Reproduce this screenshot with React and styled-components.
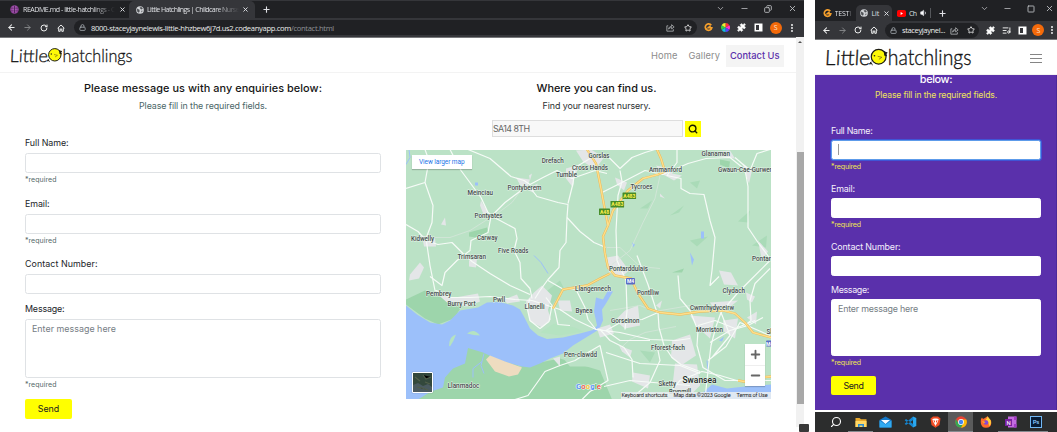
import React, { useLayoutEffect, useRef, useState } from "react";
import styled, { createGlobalStyle } from "styled-components";
import {
  ArrowLeft, ArrowRight, RotateCw, House, Lock, Star, X, Plus, Minus, ChevronDown,
  Copy, Square, EllipsisVertical, Puzzle, Search, Volume1, ListMusic,
} from "lucide-react";

const Global = createGlobalStyle`
  * { box-sizing: border-box; }
  body { margin: 0; background: #fff; overflow: hidden; font-family: Inter, "Liberation Sans", sans-serif; }
  svg { display: block; flex: none; }
`;

/* ---------- text that is tracked to an exact width ---------- */
const FitBox = styled.span`
  display: block;
  flex: none;
  width: ${(p) => p.$w}px;
  white-space: nowrap;
`;
const FitText = styled.span`
  display: inline-block;
`;
function Fit({ w, children }) {
  const ref = useRef(null);
  const [spacing, setSpacing] = useState(0);
  useLayoutEffect(() => {
    const natural = ref.current.getBoundingClientRect().width;
    setSpacing((w - natural) / ref.current.textContent.length);
  }, [w]);
  return (
    <FitBox $w={w}>
      <FitText ref={ref} style={{ letterSpacing: spacing }}>{children}</FitText>
    </FitBox>
  );
}

/* ---------- page ---------- */
const Page = styled.main`
  position: relative;
  display: flex;
  gap: 11px;
  width: 1057px;
  height: 432px;
  overflow: hidden;
`;
const Window = styled.section`
  display: flex;
  flex-direction: column;
  flex: none;
  width: ${(p) => p.$w}px;
  height: 432px;
`;
const Corner = styled.div`
  position: absolute;
  left: 799px;
  top: 424px;
  width: 10px;
  height: 8px;
  background: #393939;
  border-radius: 1px;
`;

/* ---------- browser chrome ---------- */
const ui = `font-family: "Open Sans", "Noto Sans", sans-serif; font-weight: 500;`;
const TabStrip = styled.div`
  ${ui}
  display: flex;
  height: ${(p) => p.$h}px;
  padding-top: ${(p) => p.$top}px;
  background: #202124;
  border-top: 1px solid ${(p) => p.$line};
  color: #dfe1e5;
  font-size: 7px;
`;
const Tab = styled.div`
  display: flex;
  align-items: center;
  gap: ${(p) => p.$gap ?? 3}px;
  width: ${(p) => p.$w}px;
  padding-left: ${(p) => p.$pl}px;
  border-radius: 5px 5px 0 0;
  background: ${(p) => (p.$active ? "#35363a" : "transparent")};
  flex: none;
`;
const Fade = styled.div`
  overflow: hidden;
  mask-image: linear-gradient(90deg, #000 75%, transparent);
`;
const Controls = styled.div`
  display: flex;
  align-items: center;
  height: 15px;
  margin-left: auto;
  margin-top: -${(p) => p.$up}px;
  color: #c4c6ca;
`;
const Cell = styled.div`
  display: flex;
  align-items: center;
  justify-content: center;
  flex: none;
  width: ${(p) => p.$w}px;
  height: 100%;
  color: ${(p) => p.$c || "inherit"};
`;
const Flip = styled.span`
  display: block;
  transform: scaleX(-1);
`;
const Toolbar = styled.div`
  ${ui}
  display: flex;
  align-items: center;
  height: ${(p) => p.$h}px;
  padding-left: 3px;
  background: #35363a;
  border-bottom: 1px solid #77787b;
  color: #eceded;
  font-size: 7.6px;
`;
const Address = styled.div`
  display: flex;
  align-items: center;
  width: ${(p) => p.$w}px;
  height: 15px;
  padding-left: ${(p) => p.$pl}px;
  margin-left: ${(p) => p.$ml}px;
  margin-right: 3px;
  border-radius: 8px;
  background: #202124;
  flex: none;
`;
const AddressText = styled.div`
  display: flex;
  margin-left: ${(p) => p.$ml}px;
  margin-right: auto;
`;
const Dim = styled.span`
  color: #8f9296;
`;
const Avatar = styled.span`
  display: flex;
  align-items: center;
  justify-content: center;
  width: 12px;
  height: 12px;
  border-radius: 50%;
  background: #f46a0a;
  color: #ffe3cf;
  font-size: 7px;
`;
const Divider = styled.span`
  width: 1px;
  height: 10px;
  background: #55575b;
`;

const Share = () => (
  <svg width="9" height="9" viewBox="0 0 16 16" fill="none" stroke="#b5b7ba" strokeWidth="1.4">
    <path d="M4 5H1.500V14.500H13V11M4.500 11C5 7.500 7 6 10 6V3L14.500 7L10 10.500V8C7.500 8 6 9 4.500 11Z" />
  </svg>
);
const GMark = () => (
  <svg width="9" height="9" viewBox="0 0 18 18" fill="none" stroke="#f6a02c" strokeWidth="3.4">
    <path d="M14.500 4.500A6.500 6.500 0 1 0 15.500 9.500H9L13 6" />
  </svg>
);
const Wheel = () => (
  <svg width="9" height="9" viewBox="-9 -9 18 18">
    {["#f33", "#f3c", "#54f", "#1bd", "#3c4", "#ee3"].map((c, i) => (
      <path key={c} d="M0 0L-4.500 -7.800A9 9 0 0 1 4.500 -7.800Z" fill={c} transform={`rotate(${i * 60 + 30})`} />
    ))}
  </svg>
);
const Panel = () => (
  <svg width="9" height="9" viewBox="0 0 9 9">
    <path d="M.5 .5H8.500V8.500H.5Z" fill="#fff" />
    <path d="M2 2H5V7H2Z" fill="#35363a" />
  </svg>
);
const Gitpod = () => (
  <svg width="9" height="9" viewBox="0 0 10 10">
    <circle cx="5" cy="5" r="4.700" fill="#94449f" />
    <path d="M5 1V9M1.500 3.500H8.500M1.500 6.500H8.500" stroke="#55205f" strokeWidth="1" />
    <path d="M3.500 1.500V8M6.500 1.500V8" stroke="#d391dc" strokeWidth=".5" />
  </svg>
);
const Site = () => (
  <svg width="8" height="8" viewBox="0 0 10 10">
    <circle cx="5" cy="5" r="4.800" fill="#d0d2d5" />
    <path d="M1.200 3.200L4.300 4.800L4.600 6.500L3.600 8.500L1.500 6.800ZM4.500 1.500L7.500 1.500L8.500 3.500L6.500 4.500L5.300 3.200ZM6.500 6L8.500 5.800L7 8.200Z" fill="#4f5256" />
  </svg>
);
const YouTube = () => (
  <svg width="9" height="7" viewBox="0 0 9 7">
    <rect width="9" height="7" rx="1.800" fill="#f00" />
    <path d="M3.600 2V5L6 3.500Z" fill="#fff" />
  </svg>
);

const NavIcons = ({ w }) => (
  <>
    <Cell $w={w}><ArrowLeft size={9} strokeWidth={2.8} /></Cell>
    <Cell $w={w} $c="#85878a"><ArrowRight size={9} strokeWidth={2.5} /></Cell>
    <Cell $w={w}><RotateCw size={8} strokeWidth={3} /></Cell>
    <Cell $w={w}>
      <svg width="8" height="8" viewBox="0 0 8 8" fill="none" stroke="currentColor" strokeWidth="1">
        <path d="M.6 4.200L4 1L7.400 4.200M1.700 3.500V7.300H3.200V5H4.800V7.300H6.300V3.500" />
      </svg>
    </Cell>
  </>
);

/* ---------- site header ---------- */
const Header = styled.header`
  display: flex;
  align-items: center;
  flex: none;
  height: ${(p) => p.$h}px;
  padding: ${(p) => p.$pad};
  background: #fff;
  border-bottom: 1px solid #f3f3f3;
`;
const Nav = styled.nav`
  display: flex;
  align-items: center;
  margin-left: auto;
  font-size: 9.3px;
  color: #8c8c8c;
`;
const NavLink = styled.span`
  display: flex;
  align-items: center;
  height: 22px;
  padding: 0 ${(p) => (p.$active ? 4.5 : 5.5)}px;
  font-weight: ${(p) => (p.$active ? 500 : 400)};
  color: ${(p) => (p.$active ? "#5a30ab" : "inherit")};
  background: ${(p) => (p.$active ? "#f4f4f4" : "transparent")};
`;
const Burger = styled.div`
  display: flex;
  flex-direction: column;
  gap: 3px;
  margin-left: auto;
  width: 12px;
`;
const BurgerLine = styled.span`
  height: 1px;
  background: #858585;
`;
const LogoSvg = styled.svg`
  font-family: Lato, sans-serif;
  font-weight: 300;
  font-size: 17.5px;
  overflow: visible;
`;
const Logo = ({ w }) => (
  <LogoSvg width={w} height={(w * 22) / 124} viewBox="0 0 124 22">
    <g fill="#161616" stroke="#161616" strokeWidth=".3">
      <text transform="translate(.5 17) skewX(-3)" textLength="38" lengthAdjust="spacingAndGlyphs">Little</text>
      <text x="53.500" y="17" textLength="70" lengthAdjust="spacingAndGlyphs">hatchlings</text>
    </g>
    <circle cx="45.800" cy="9.800" r="6.200" fill="#fdf907" stroke="#1c1c14" strokeWidth="1" />
    <path d="M50 5.500L53 6.500L51.700 7.500L52.500 9L50.500 8.500M39.500 14L38 16L40 15.500L40.500 17" fill="#1c1c14" stroke="#1c1c14" strokeWidth=".7" />
    <circle cx="42.300" cy="9" r=".7" fill="#222" />
    <path d="M45 9.500L48.500 10.300L46 12" fill="none" stroke="#775e19" strokeWidth=".6" />
  </LogoSvg>
);

/* ---------- contact form ---------- */
const DeskBody = styled.div`
  display: flex;
  flex: 1;
  min-height: 0;
`;
const DeskContent = styled.div`
  display: flex;
  gap: 25px;
  width: 796px;
  padding: 5px 0 0 25px;
`;
const Column = styled.div`
  display: flex;
  flex-direction: column;
  width: ${(p) => p.$w}px;
`;
const FinderHead = styled.div`
  padding-left: 16px;
`;
const Title = styled.h1`
  display: flex;
  justify-content: center;
  flex: none;
  margin: 0;
  font-size: 10.9px;
  font-weight: 500;
  line-height: 20px;
  color: ${(p) => (p.$dark ? "#fff" : "#151515")};
`;
const Subtitle = styled.p`
  display: flex;
  justify-content: center;
  flex: none;
  margin: ${(p) => p.$mt || 0}px 0 ${(p) => p.$mb}px;
  font-size: ${(p) => p.$size || 8.9}px;
  line-height: 15px;
  color: ${(p) => p.$c};
`;
const Field = styled.div`
  display: flex;
  flex-direction: column;
  flex: none;
  margin-bottom: ${(p) => p.$mb}px;
`;
const Label = styled.label`
  font-size: 8.9px;
  line-height: 18px;
  color: ${(p) => (p.$dark ? "#f4effb" : "#222529")};
`;
const Input = styled.div`
  height: ${(p) => p.$h}px;
  margin-top: ${(p) => p.$mt}px;
  padding: 3.5px 6px;
  border: 1px solid ${(p) => (p.$focus ? "#5d9bea" : p.$dark ? "#fff" : "#dfe2e5")};
  border-radius: 2.5px;
  background: #fff;
  font-size: 8.9px;
  line-height: 12px;
  color: #757d84;
  box-shadow: ${(p) => (p.$focus ? "0 0 0 1px #3f55d6" : "none")};
`;
const Caret = styled.span`
  display: block;
  width: 1px;
  height: 11px;
  background: #999;
`;
const Required = styled.small`
  font-size: 7px;
  line-height: 14px;
  color: ${(p) => (p.$dark ? "#f1e84d" : "#53696a")};
`;
const Send = styled.div`
  display: flex;
  align-items: center;
  justify-content: center;
  flex: none;
  width: ${(p) => p.$w}px;
  height: ${(p) => p.$h}px;
  border-radius: 2px;
  background: #ff0;
  color: #202020;
  font-size: 8.9px;
`;

const deskForm = {
  h: 20, mt: 1, area: 59, gap: 7.7, shortGap: 5.6, areaGap: 7, sendW: 47, sendH: 20, sendText: 21.5,
  labels: [43.5, 24.5, 72.5, 39.5], dark: false, hint: 84, req: 31.5,
};
const phoneForm = {
  h: 20, mt: 0.3, area: 57, gap: 5.9, shortGap: 4.2, areaGap: 6.3, sendW: 45, sendH: 19, sendText: 20,
  labels: [41.5, 24, 69.5, 38], dark: true, hint: 80, req: 30,
};

function Form({ f, focus }) {
  const [a, b, c, d] = f.labels;
  const required = <Required $dark={f.dark}><Fit w={f.req}>*required</Fit></Required>;
  return (
    <>
      <Field $mb={f.gap}>
        <Label $dark={f.dark}><Fit w={a}>Full Name:</Fit></Label>
        <Input $h={f.h} $mt={f.mt} $dark={f.dark} $focus={focus}>{focus && <Caret />}</Input>
        {required}
      </Field>
      <Field $mb={f.gap}>
        <Label $dark={f.dark}><Fit w={b}>Email:</Fit></Label>
        <Input $h={f.h} $mt={f.mt} $dark={f.dark} />
        {required}
      </Field>
      <Field $mb={f.shortGap}>
        <Label $dark={f.dark}><Fit w={c}>Contact Number:</Fit></Label>
        <Input $h={f.h} $mt={f.mt} $dark={f.dark} />
      </Field>
      <Field $mb={f.areaGap}>
        <Label $dark={f.dark}><Fit w={d}>Message:</Fit></Label>
        <Input $h={f.area} $mt={f.mt} $dark={f.dark}><Fit w={f.hint}>Enter message here</Fit></Input>
        {required}
      </Field>
      <Send $w={f.sendW} $h={f.sendH}><Fit w={f.sendText}>Send</Fit></Send>
    </>
  );
}

/* ---------- finder and map ---------- */
const Finder = styled.div`
  display: flex;
  gap: 2px;
  align-items: center;
  height: 17px;
  margin: 0 0 13px 86px;
`;
const Postcode = styled.div`
  width: 191px;
  height: 17px;
  padding-left: 0;
  border: 1px solid #dedede;
  background: #f8f8f8;
  font-size: 8.9px;
  line-height: 15px;
  color: #666;
`;
const SearchButton = styled.div`
  display: flex;
  align-items: center;
  justify-content: center;
  width: 16px;
  height: 16px;
  background: #ff0;
  color: #171700;
`;
const MapFrame = styled.div`
  position: relative;
  width: 365px;
  height: 249px;
  overflow: hidden;
  font-family: Roboto, sans-serif;
`;
const LargerMap = styled.div`
  position: absolute;
  left: 6px;
  top: 5px;
  width: 60px;
  height: 14px;
  padding-left: 7px;
  background: #fff;
  box-shadow: 0 1px 1px #0003;
  color: #1a73e8;
  font-size: 6.5px;
  line-height: 14px;
`;
const Satellite = styled.div`
  position: absolute;
  left: 6px;
  top: 222px;
  width: 21px;
  height: 21px;
  border: 1px solid #fff;
  border-radius: 1px;
  overflow: hidden;
  box-shadow: 0 0 1px #0008;
`;
const Zoom = styled.div`
  position: absolute;
  left: 339px;
  top: 194px;
  display: flex;
  flex-direction: column;
  width: 20px;
  height: 42px;
  background: #fff;
  color: #666;
  box-shadow: 0 1px 1px #0003;
`;
const ZoomKey = styled.div`
  display: flex;
  align-items: center;
  justify-content: center;
  flex: 1;
  &:last-child { border-top: 1px solid #eee; }
`;
const MapFooter = styled.div`
  position: absolute;
  right: 0;
  bottom: 0;
  display: flex;
  gap: 6px;
  height: 7px;
  padding: 0 3.5px 0 1px;
  background: #e9eef0dd;
  color: #222;
  font-size: 5.6px;
  line-height: 7px;
`;

const white = [
  "M425 149L429 160L425 182L433 205L432 222L426 238L430 265L435 290L447 293",
  "M406 188L425 182",
  "M406 224L418 231L426 240L438 244L452 242L463 253L472 261L490 273L510 285L530 294",
  "M450 149L461 170L481 197L488 212L492 215L505 202L521 190",
  "M468 149L490 158L511 176L524 180L530 184L543 177L557 170L572 178L595 170L607 173",
  "M530 187L537 196L558 202L568 204L567 217L566 242L560 250L559 267L548 279L540 290L535 298",
  "M568 203L573 183L575 167L590 158",
  "M567 217L580 231L594 242L606 247",
  "M492 216L500 220L515 228L517 238L514 250L520 262L521 278L530 288L532 298",
  "M430 276L442 285L445 272L457 260L470 250L471 240L488 232L491 216",
  "M436 290L450 297L470 297L490 296L515 299L532 300L560 309L575 319L596 329L612 331",
  "M530 298L527 307L530 320L540 328L549 321L552 305L546 297",
  "M554 306L558 324L570 325M548 280L562 288L580 289L593 289",
  "M577 291L585 307L588 319L596 329",
  "M600 329L610 340L624 347L632 359L633 377M596 329L620 332L650 339L676 340L690 338",
  "M600 345L588 352L575 360L560 365L545 371L538 381L528 395L515 399M600 345L608 380L590 391L582 399",
  "M603 153L610 158L620 168L632 157L645 152L655 149M620 170L622 181L618 195L616 230L617 260L626 280L627 310L625 329",
  "M602 192L618 184L645 170L663 174L688 163L706 158L730 157L745 169L748 186L748 227L758 242L770 258",
  "M677 149L677 162L667 175L681 178L681 188L690 193L704 194L710 220L715 237L712 270L710 285L719 276",
  "M735 157L750 170L757 153L770 149",
  "M770 260L750 280L738 292L721 312L716 326L711 345L708 370L705 399",
  "M770 268L755 283L750 300L751 320L745 325",
  "M678 275L680 298L690 310L698 330L697 345L703 367L725 380L771 380",
  "M658 312L659 327L664 345L672 357L681 364L700 371",
  "M658 312L642 319L624 320L606 330L620 340L650 340",
  "M606 352L640 363L680 365L700 373M604 386L630 380L665 383L690 385",
  "M637 255L648 284L657 312M630 399L650 382L660 360L657 345",
  "M708 360L726 346L740 322L770 335M698 325L715 320L735 328L755 320M721 312L730 335L712 357",
  "M665 398L680 380L702 371L720 375L740 381M710 342L730 330L748 325L763 317",
];
const thin = [
  "M492 216L470 230L450 237L430 237", "M520 191L512 202L500 211L491 216",
  "M660 175L655 198L643 222L630 250L612 264", "M607 247L620 247L640 266L660 268",
  "M610 310L640 305L655 311L690 305", "M620 348L630 339L645 332L676 326",
];
const yellow = [
  "M587 149L596 163L601 188L605 210L608 225L603 236L605 253L608 267L615 275L631 278L638 293L648 308L660 312L680 314L700 311L723 310L735 313L745 322L753 332L771 337",
  "M608 225L613 210L628 190L643 178L658 174L665 171L661 158L657 149",
  "M553 308L563 289L587 285L600 278L610 273",
  "M738 380L750 382L760 377L771 376",
];
const towns = [
  "M576 150L591 149L604 157L595 169L583 161Z", "M566 168L580 164L574 177L573 187L566 178Z",
  "M516 177L530 179L527 188L538 183L533 192L521 186Z", "M481 200L488 212L494 218L484 215L480 205Z",
  "M656 165L675 169L672 173L682 175L674 180L663 174Z", "M615 177L627 182L624 190L617 184Z",
  "M704 152L725 157L735 158L730 150Z", "M743 163L752 170L749 183L744 170Z",
  "M422 235L435 238L436 246L424 246Z", "M469 260L477 258L476 267L469 266Z",
  "M410 274L420 262L424 267L419 278L409 280Z", "M438 294L455 297L478 293L480 301L467 306L447 302Z",
  "M504 299L517 294L520 301L507 303Z", "M526 301L534 292L542 285L552 295L548 310L551 319L542 327L530 321Z",
  "M558 300L570 300L572 311L560 310Z", "M607 257L618 255L629 270L622 276L609 272Z",
  "M625 310L638 305L640 325L625 328L615 320Z", "M597 328L610 324L614 333L600 337Z",
  "M690 315L715 317L710 338L698 327Z", "M710 302L738 300L728 308L714 308Z",
  "M672 340L690 334L696 355L681 365L671 357Z", "M675 363L697 364L700 385L688 397L672 390Z",
  "M633 372L650 375L648 388L632 381Z", "M723 320L738 318L735 338L724 331Z",
  "M719 270L731 272L738 285L724 284Z", "M746 292L755 296L752 302L747 299Z", "M747 317L757 311L756 324Z",
  "M758 240L768 251L762 260Z", "M619 345L632 350L630 357L622 351Z", "M553 358L560 356L560 366Z",
  "M441 224L445 217L446 225Z", "M660 193L665 198L660 196Z", "M656 305L662 300L660 308Z",
  "M529 175L532 173L530 180Z",
];
/* name, left, width, vertical centre */
const labels = [
  ["Drefach", 541.7, 22, 160], ["Cross Hands", 572, 36, 167], ["Gorslas", 588.5, 21, 155.5],
  ["Tumble", 556, 21, 174.5], ["Pontyberem", 507.5, 34, 187.5], ["Meinciau", 467.5, 25.5, 192],
  ["Pontyates", 474.5, 28, 215.5], ["Carway", 477, 20.5, 237], ["Kidwelly", 411, 23, 238.5],
  ["Five Roads", 498, 30.5, 250.5], ["Trimsaran", 457.5, 28.5, 256], ["Pembrey", 426, 25.5, 293.5],
  ["Burry Port", 447.5, 28, 303.5], ["Pwll", 493, 12, 299.5], ["Llanelli", 524.5, 20, 306.5],
  ["Llangennech", 575, 36, 288], ["Bynea", 575.5, 17, 310], ["Pen-clawdd", 564, 33, 354.5],
  ["Llanmadoc", 447.5, 32, 385], ["Glanaman", 701.5, 28.5, 153.5], ["Ammanford", 649, 33, 169],
  ["Gwaun-Cae-Gurwen", 718, 55, 169.5], ["Tycroes", 630.5, 22, 186], ["Pontarddulais", 609, 39, 268],
  ["Pontlliw", 637, 22, 292], ["Gorseinon", 611, 28.5, 320.5], ["Fforest-fach", 651, 34, 347.5],
  ["Cwmrhydyceirw", 690, 44, 307], ["Clydach", 722.5, 22.5, 290], ["Morriston", 696, 27, 329.5],
  ["Sketty", 658.5, 17.5, 383.5], ["Brynmill", 669, 22, 391.5], ["Pontardawe", 752, 34, 258],
  ["Skewen", 766.5, 22, 331.5],
];
const shields = [["A483", 622.5, 192], ["A483", 610.5, 200.5], ["A48", 599, 208]];

const MapArt = () => (
  <svg width="365" height="249" viewBox="406 149.500 365 249">
    <rect x="406" y="149" width="366" height="250" fill="#bbe2c6" />
    <g fill="#9dd5ab">
      <path d="M406 304L406 299L425 290L445 297L461 307L454 318L438 324L425 318Z" />
      <path d="M406 399L450 360L468 347L500 354L520 366L560 358L600 370L606 399Z" />
      <path d="M469 232L487 227L488 232L476 237L469 236Z" />
      <path d="M720 159L730 161L729 168L720 164ZM600 370L612 399H600ZM672 272L684 268L682 272Z" />
    </g>
    <g fill="#aadbb8">
      <path d="M640 208L652 200L648 208ZM670 215L684 205L679 212ZM738 221L750 210L748 222ZM690 240L708 236L697 246ZM690 182L700 180L697 188ZM752 245L767 235L766 247Z" />
      <path d="M540 296L560 280L564 288L548 310ZM640 350L655 352L650 362Z" />
    </g>
    <path d="M560 354L575 345L592 335L604 345L602 366L570 366Z" fill="#bbe2c6" />
    <path
      fill="#9cc0fa"
      d="M406 305L417 314L430 322L442 324L450 320L460 310L478 307L487 302L500 301.500L513 305L520 309L525 318L530 328L538 335L547 338.500L563 337L580 333L593 329.500L597 325L594 311L596 297L603 299L608 290L613 291L606 303L602 309L603 320L599 329L573 345L563 353L550 358L540 363L530 367L522 366L500 360L483 352L468 347.500L465 363L453 368L445 377L443 387L431 391L418 399H406Z"
    />
    <path fill="#9cc0fa" d="M664 399L680 394L703 392L712 384L727 388L745 386L771 384V399Z" />
    <g fill="none" stroke="#9cc0fa" strokeWidth="1">
      <path d="M409 149L410 157L406 164M534 255L541 262L548 273M484 353L481 365L484 373M482 361L473 368L473 377M707 360L708 372" />
    </g>
    <path fill="#9cc0fa" d="M701 231H704V238H701ZM475 182H478V185H475ZM632 242L635 244L633 247ZM719 340L724 336L722 341ZM690 252L694 259L692 265Z" />
    <path fill="#b5e3c1" d="M449 345Q449 336 456 334Q454 340 450 346ZM467 333Q474 327 480 335Q474 335 467 333ZM540 332L554 323L575 327L584 331L560 335Z" />
    <path fill="#eedcc0" d="M486 359L490 355L505 361L522 367L518 374L509 376L495 371Z" />
    <g fill="#e4e6e8">{towns.map((d) => <path key={d} d={d} />)}</g>
    <g fill="none" stroke="#d5e6da" strokeWidth=".8" strokeLinejoin="round">{thin.map((d) => <path key={d} d={d} />)}</g>
    <g fill="none" stroke="#f6fbf7" strokeWidth="1.200" strokeLinejoin="round">{white.map((d) => <path key={d} d={d} />)}</g>
    <g fill="none" strokeLinejoin="round">
      {yellow.map((d) => <path key={d} d={d} stroke="#eeb957" strokeWidth="2.300" />)}
      {yellow.map((d) => <path key={d} d={d} stroke="#fddf8b" strokeWidth="1.300" />)}
    </g>
    <g fontFamily="Roboto" textAnchor="middle" fontWeight="700" fontSize="5">
      {shields.map(([name, x, y]) => (
        <g key={x}>
          <rect x={x} y={y} width={name === "A48" ? 11 : 13.6} height="6.500" rx=".6" fill="#478b27" />
          <text x={x + (name === "A48" ? 5.5 : 6.8)} y={y + 5} fill="#fff04b">{name}</text>
        </g>
      ))}
      <rect x="626" y="277.500" width="9" height="6.500" rx="1" fill="#5a6bc5" />
      <text x="630.500" y="282.700" fill="#fff">M4</text>
      <rect x="766" y="340" width="9" height="6" rx="1" fill="#5a6bc5" />
      <text x="769.500" y="345" fill="#fff">M4</text>
    </g>
    <g fontFamily="Roboto" fontSize="6.900" fontWeight="500" fill="#454c4c" stroke="#e6f5ea" strokeWidth="1" paintOrder="stroke" strokeLinejoin="round">
      {labels.map(([name, x, w, y]) => (
        <text key={name} x={x} y={y + 2} textLength={w} lengthAdjust="spacingAndGlyphs">{name}</text>
      ))}
      <text x="682.500" y="382.500" fontSize="8.800" fill="#1f2424" textLength="34" lengthAdjust="spacingAndGlyphs">Swansea</text>
    </g>
    <text x="576" y="388.500" fontFamily="Roboto" fontWeight="500" fontSize="8" textLength="25" lengthAdjust="spacingAndGlyphs" stroke="#fff" strokeWidth=".8" paintOrder="stroke">
      {[["G", "#4285f4"], ["o", "#ea4335"], ["o", "#fbbc05"], ["g", "#4285f4"], ["l", "#34a853"], ["e", "#ea4335"]].map(([c, fill], i) => (
        <tspan key={i} fill={fill}>{c}</tspan>
      ))}
    </text>
  </svg>
);

/* ---------- scrollbar ---------- */
const Scrollbar = styled.div`
  display: flex;
  flex-direction: column;
  width: 8px;
  height: 390px;
  margin-top: -36px;
  background: #f1f1f1;
  position: relative;
`;
const ScrollArrow = styled.span`
  width: 0;
  height: 0;
  margin: 4px auto 0;
  border: 2px solid transparent;
  border-top-width: 0;
  border-bottom-color: #505050;
`;
const Thumb = styled.span`
  width: 7px;
  height: 252px;
  margin: 109px 0 0 1px;
  background: #a8a8a8;
`;

/* ---------- phone ---------- */
const PhoneBody = styled.div`
  display: flex;
  flex-direction: column;
  height: 335px;
  padding: 0 15px 0 16px;
  background: #5a30ab;
  border-right: 1px solid #4c2899;
  overflow: hidden;
`;
const Heading = styled.div`
  flex: none;
  margin-top: -6px;
`;
const Taskbar = styled.div`
  display: flex;
  height: 20px;
  margin-top: 2px;
  padding-left: 8px;
  background: #2c2d2d;
`;
const Task = styled.div`
  display: flex;
  align-items: center;
  justify-content: center;
  width: 25px;
  padding-top: 1px;
  color: #fff;
  background: ${(p) => (p.$on ? "#5a5b5b" : "transparent")};
  border-bottom: 1px solid ${(p) => (p.$open ? "#858b90" : "transparent")};
`;

const Folder = () => (
  <svg width="12" height="11" viewBox="0 0 12 11">
    <path d="M.5 1H4.500L6 2.300H11.500V10H.5Z" fill="#e9a92c" /><path d="M.5 4H11.500V10H.5Z" fill="#ffd765" />
    <path d="M3 7H9V10H7.500V8.500H4.500V10H3Z" fill="#298bd4" />
  </svg>
);
const MailApp = () => (
  <svg width="13" height="12" viewBox="0 0 13 12">
    <path d="M.5 4L6.500 .5L12.500 4V11.500H.5Z" fill="#1478c8" /><path d="M2 4H11L6.500 8Z" fill="#f4faff" />
    <path d="M.5 4.500L6.500 8.500L12.500 4.500V11.500H.5Z" fill="#31aaf0" />
  </svg>
);
const Code = () => (
  <svg width="13" height="12" viewBox="0 0 13 12">
    <path d="M9 .5L12.300 2V10L9 11.500Z" fill="#2aa9f1" />
    <path d="M9 .5L.7 7.800L2 9L9.500 3.700ZM9 11.500L.7 4.200L2 3L9.500 8.300Z" fill="#1685cf" />
  </svg>
);
const Brave = () => (
  <svg width="11" height="12" viewBox="0 0 11 12">
    <path d="M3 .5H8L10.500 2.500L9.500 9L5.500 11.800L1.500 9L.5 2.500Z" fill="#f14d25" />
    <path d="M2.300 3L4.500 2.500H6.500L8.700 3L7.700 6L6.500 8L5.500 10L4.500 8L3.300 6Z" fill="#fff" />
    <path d="M3.500 4L5 4.700V7L3.800 5.500ZM7.500 4L6 4.700V7L7.200 5.500Z" fill="#f14d25" />
  </svg>
);
const Chrome = () => (
  <svg width="12" height="12" viewBox="-6 -6 12 12">
    <circle r="5.800" fill="#ea4335" />
    <path d="M-5 -2.900A5.800 5.800 0 0 0 0 5.800L2.400 1.400L-2.400 1.400Z" fill="#34a853" />
    <path d="M5.300 -2.500A5.800 5.800 0 0 1 0 5.800L2.400 1.400L1 -2.500Z" fill="#fbbc05" />
    <circle r="2.900" fill="#fff" /><circle r="2.200" fill="#4285f4" />
  </svg>
);
const Firefox = () => (
  <svg width="12" height="12" viewBox="0 0 12 12">
    <path d="M1 3L2 1.500L3 3L5 2L7.500 .3L9 2.500L11 4.500Q12.500 11.500 6 11.800Q-.5 11.500 1 3Z" fill="#ff6b2c" />
    <path d="M7.500 .3L10.500 4Q12 8 9 10.300Q9 5 5.500 4Q7.500 2.500 7.500 .3Z" fill="#ffd13b" />
    <circle cx="6" cy="6.500" r="2.300" fill="#8448d8" /><path d="M2 5Q4.500 4.500 5.500 6.500L3.500 7.500Z" fill="#ff9c2a" />
  </svg>
);
const Note = () => (
  <svg width="12" height="12" viewBox="0 0 12 12">
    <path d="M3 .5H11.500V11.500H3Z" fill="#c46be0" /><path d="M9 .5H11.500V4H9ZM9 8H11.500V11.500H9Z" fill="#a33dc5" />
    <path d="M0 3H7V10H0Z" fill="#7a1fa2" />
    <text x="3.500" y="8.500" fontSize="5.500" fontWeight="700" fill="#fff" textAnchor="middle" fontFamily="Lato">N</text>
  </svg>
);
const Ps = () => (
  <svg width="12" height="12" viewBox="0 0 12 12">
    <rect x=".5" y=".5" width="11" height="11" fill="#071c35" stroke="#72b8f4" />
    <text x="6" y="8.200" fontSize="6.200" fontWeight="700" fill="#8bcaff" textAnchor="middle" fontFamily="Lato">Ps</text>
  </svg>
);

function Desktop() {
  return (
    <Window $w={804}>
      <TabStrip $h={18} $top={0} $line="#35363a">
        <Tab $w={129} $pl={10} $gap={4}>
          <Gitpod />
          <Fade><Fit w={92}>README.md - little-hatchlings - C</Fit></Fade>
          <X size={7} strokeWidth={3.2} />
        </Tab>
        <Tab $active $w={126} $pl={7}>
          <Site />
          <Fade><Fit w={92}>Little Hatchlings | Childcare Nurse</Fit></Fade>
          <X size={7} strokeWidth={3.2} />
        </Tab>
        <Tab $w={20} $pl={7}><Plus size={9} strokeWidth={3} /></Tab>
        <Controls $up={0}>
          <Cell $w={24}><ChevronDown size={9} /></Cell>
          <Cell $w={24}><Minus size={9} /></Cell>
          <Cell $w={24}><Flip><Copy size={8} strokeWidth={2.5} /></Flip></Cell>
          <Cell $w={24}><X size={9} strokeWidth={2.3} /></Cell>
        </Controls>
      </TabStrip>
      <Toolbar $h={20}>
        <NavIcons w={16.6} />
        <Address $w={623} $ml={4.6} $pl={5}>
          <Lock size={7} strokeWidth={3} color="#9aa0a6" />
          <AddressText $ml={5}>
            <Fit w={200}>8000-staceyjaynelewis-little-hhzbew6j7d.us2.codeanyapp.com</Fit>
            <Dim><Fit w={43}>/contact.html</Fit></Dim>
          </AddressText>
          <Cell $w={17}><Share /></Cell>
          <Cell $w={18}><Star size={8} strokeWidth={2.6} /></Cell>
        </Address>
        <Cell $w={16.8}><GMark /></Cell>
        <Cell $w={16.8}><Wheel /></Cell>
        <Cell $w={16.8}><Puzzle size={9} fill="#fff" /></Cell>
        <Cell $w={16.8}><Panel /></Cell>
        <Cell $w={16.8}><Avatar>S</Avatar></Cell>
        <Cell $w={16.8}><EllipsisVertical size={10} strokeWidth={3} /></Cell>
      </Toolbar>
      <Header $h={35} $pad="1px 20px 0 9px">
        <Logo w={124} />
        <Nav>
          <NavLink><Fit w={26.5}>Home</Fit></NavLink>
          <NavLink><Fit w={31.5}>Gallery</Fit></NavLink>
          <NavLink $active><Fit w={49.5}>Contact Us</Fit></NavLink>
        </Nav>
      </Header>
      <DeskBody>
        <DeskContent>
          <Column $w={356}>
            <Title><Fit w={238}>Please message us with any enquiries below:</Fit></Title>
            <Subtitle $c="#4b6667" $mb={21}><Fit w={128}>Please fill in the required fields.</Fit></Subtitle>
            <Form f={deskForm} />
          </Column>
          <Column $w={365}>
            <FinderHead>
              <Title><Fit w={120}>Where you can find us.</Fit></Title>
              <Subtitle $c="#2b2f30" $mb={7}><Fit w={108}>Find your nearest nursery.</Fit></Subtitle>
            </FinderHead>
            <Finder>
              <Postcode><Fit w={36.5}>SA14 8TH</Fit></Postcode>
              <SearchButton><Search size={10} strokeWidth={3.3} /></SearchButton>
            </Finder>
            <MapFrame>
              <MapArt />
              <LargerMap><Fit w={45.5}>View larger map</Fit></LargerMap>
              <Satellite>
                <svg width="19" height="19" viewBox="0 0 19 19">
                  <rect width="19" height="19" fill="#33483c" />
                  <path d="M0 12L5 10L10 13L15 11L19 14V19H0Z" fill="#4a5a60" />
                  <path d="M2 4L7 8M10 2L13 6L18 4M12 9L17 11M4 14L9 15L15 17" stroke="#52604b" strokeWidth="1.200" />
                </svg>
              </Satellite>
              <Zoom>
                <ZoomKey><Plus size={13} strokeWidth={3.4} /></ZoomKey>
                <ZoomKey><Minus size={13} strokeWidth={3.4} /></ZoomKey>
              </Zoom>
              <MapFooter>
                <Fit w={46}>Keyboard shortcuts</Fit>
                <Fit w={57}>Map data ©2023 Google</Fit>
                <Fit w={31}>Terms of Use</Fit>
              </MapFooter>
            </MapFrame>
          </Column>
        </DeskContent>
        <Scrollbar><ScrollArrow /><Thumb /></Scrollbar>
      </DeskBody>
    </Window>
  );
}

function Phone() {
  return (
    <Window $w={242}>
      <TabStrip $h={21} $top={4} $line="#202124">
        <Tab $w={41} $pl={7.5}><GMark /><Fade><Fit w={17}>TESTI</Fit></Fade></Tab>
        <Tab $active $w={36} $pl={4} $gap={3.5}><Site /><Fit w={7.5}>Lit</Fit><X size={7} strokeWidth={3.2} /></Tab>
        <Tab $w={38} $pl={5}><YouTube /><Fit w={7.5}>Ch</Fit><Volume1 size={8} fill="#fff" /></Tab>
        <Tab $w={20} $pl={0} $gap={6.5}><Divider /><Plus size={9} strokeWidth={3} /></Tab>
        <Controls $up={4}>
          <Cell $w={23}><ChevronDown size={9} /></Cell>
          <Cell $w={23}><Minus size={9} /></Cell>
          <Cell $w={23}><Square size={8} strokeWidth={2.5} /></Cell>
          <Cell $w={15}><X size={9} strokeWidth={2.3} /></Cell>
        </Controls>
      </TabStrip>
      <Toolbar $h={19}>
        <NavIcons w={16} />
        <Address $w={94} $ml={3} $pl={5}>
          <Lock size={7} strokeWidth={3} color="#9aa0a6" />
          <AddressText $ml={5}><Fit w={43}>staceyjaynel...</Fit></AddressText>
          <Cell $w={16}><Share /></Cell>
          <Cell $w={17}><Star size={8} strokeWidth={2.6} /></Cell>
        </Address>
        <Cell $w={16.1}><Puzzle size={9} fill="#fff" /></Cell>
        <Cell $w={16.1}><ListMusic size={9} strokeWidth={2.6} /></Cell>
        <Cell $w={16.1}><Panel /></Cell>
        <Cell $w={16.1}><Avatar>S</Avatar></Cell>
        <Cell $w={10.5}><EllipsisVertical size={10} strokeWidth={3} /></Cell>
      </Toolbar>
      <Header $h={35} $pad="3px 15px 0 9px">
        <Logo w={148} />
        <Burger><BurgerLine /><BurgerLine /><BurgerLine /></Burger>
      </Header>
      <PhoneBody>
        <Heading>
          <Title $dark><Fit w={32.5}>below:</Fit></Title>
          <Subtitle $c="#eee45a" $mt={-1} $mb={18.7} $size={8.6}><Fit w={122}>Please fill in the required fields.</Fit></Subtitle>
        </Heading>
        <Form f={phoneForm} focus />
      </PhoneBody>
      <Taskbar>
        <Task><Flip><Search size={12} strokeWidth={2.2} /></Flip></Task>
        <Task $open><Folder /></Task>
        <Task><MailApp /></Task>
        <Task><Code /></Task>
        <Task><Brave /></Task>
        <Task $on $open><Chrome /></Task>
        <Task><Firefox /></Task>
        <Task $open><Note /></Task>
        <Task $open><Ps /></Task>
      </Taskbar>
    </Window>
  );
}

export default function App() {
  return (
    <>
      <Global />
      <Page>
        <Desktop />
        <Phone />
        <Corner />
      </Page>
    </>
  );
}
